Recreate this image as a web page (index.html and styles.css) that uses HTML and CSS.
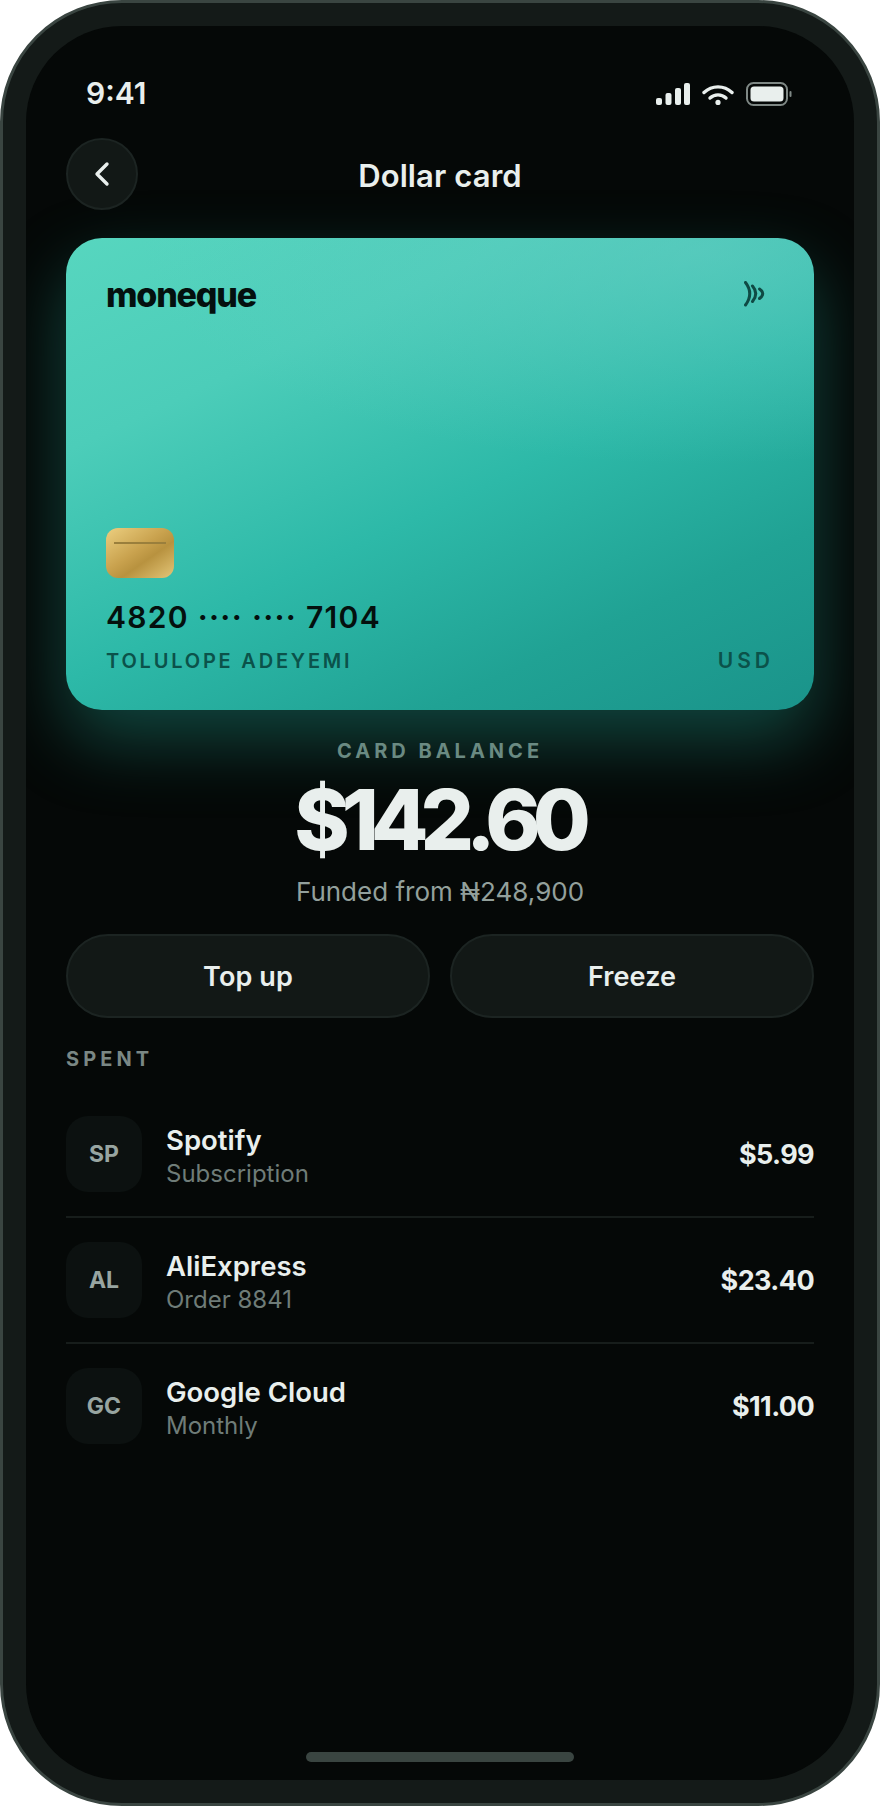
FILE: index.html
```html
<!DOCTYPE html>
<html lang="en">
<head>
<meta charset="utf-8">
<title>Dollar card</title>
<link rel="stylesheet" href="styles.css">
</head>
<body>
<div class="frame">
  <main class="screen">
    <div class="status">
      <span class="time">9:41</span>
      <div class="status-icons">
        <svg class="i-signal" width="34" height="22" viewBox="0 0 34 22"><rect x="0" y="15" width="6" height="7" rx="2"/><rect x="9.5" y="10" width="6" height="12" rx="2"/><rect x="19" y="5" width="6" height="17" rx="2"/><rect x="28" y="0" width="6" height="22" rx="2"/></svg>
        <svg class="i-wifi" width="32" height="22" viewBox="0 0 32 22" fill="none"><path d="M2 9.500C10 2 22 2 30 9.500" stroke-width="3.400" stroke-linecap="round"/><path d="M8 15C12.500 10.800 19.500 10.800 24 15" stroke-width="3.400" stroke-linecap="round"/><circle cx="16" cy="19.400" r="2.600" class="dot"/></svg>
        <svg class="i-batt" width="46" height="24" viewBox="0 0 46 24"><rect x="1" y="1" width="40" height="22" rx="6.500" fill="none" stroke="#7f8885" stroke-width="2"/><rect x="4.500" y="4.500" width="33" height="15" rx="3.500" fill="#e9efed"/><rect x="43.500" y="9" width="2" height="6" rx="1" fill="#7f8885"/></svg>
      </div>
    </div>
    <header class="nav">
      <button class="back" aria-label="Back"><svg width="18" height="26" viewBox="0 0 18 26" fill="none"><path d="M14 3L4 13L14 23" stroke="#e9efed" stroke-width="3.400" stroke-linecap="round" stroke-linejoin="round"/></svg></button>
      <h1 class="title">Dollar card</h1>
    </header>
    <section class="card">
      <div class="card-top">
        <span class="logo">moneque</span>
        <svg class="nfc" width="24" height="26" viewBox="0 0 24 26" fill="none"><path d="M1.500 1.500Q10 12.500 1.500 24M8.500 5Q15 12.500 8.500 20.500M15.500 8Q22 12.500 15.500 17.500" stroke="#0f4a44" stroke-width="3" stroke-linecap="round"/></svg>
      </div>
      <div class="chip"><span class="chip-line"></span></div>
      <div class="number">4820 <span class="dots">····</span> <span class="dots">····</span> 7104</div>
      <div class="card-foot"><span>TOLULOPE ADEYEMI</span><span class="usd">USD</span></div>
    </section>
    <section class="balance">
      <div class="bal-label">CARD BALANCE</div>
      <div class="bal-amount">$142.60</div>
      <div class="bal-sub">Funded from ₦248,900</div>
    </section>
    <div class="actions">
      <button class="action">Top up</button>
      <button class="action">Freeze</button>
    </div>
    <h2 class="spent">SPENT</h2>
    <ul class="list">
      <li class="row"><span class="avatar">SP</span><div class="info"><div class="name">Spotify</div><div class="meta">Subscription</div></div><span class="amt">$5.99</span></li>
      <li class="row"><span class="avatar">AL</span><div class="info"><div class="name">AliExpress</div><div class="meta">Order 8841</div></div><span class="amt">$23.40</span></li>
      <li class="row"><span class="avatar">GC</span><div class="info"><div class="name">Google Cloud</div><div class="meta">Monthly</div></div><span class="amt">$11.00</span></li>
    </ul>
    <div class="home"></div>
  </main>
</div>
</body>
</html>
```

FILE: styles.css
```css
* { box-sizing: border-box; }
html, body { margin: 0; padding: 0; background: #fff; }
body { font-family: Inter, "Liberation Sans", sans-serif; color: #e9efed; }
.frame {
  width: 880px; height: 1806px;
  border: 3px solid #3a4541; border-radius: 122px;
  background: #141a18; padding: 23px;
}
.screen {
  position: relative; overflow: hidden;
  height: 100%; border-radius: 96px; background: #050807;
  padding: 0 40px; display: flex; flex-direction: column;
}
.status {
  height: 112px; padding: 46px 0 0 20px;
  display: flex; justify-content: space-between; align-items: flex-start;
}
.time { font-size: 30px; font-weight: 600; line-height: 42px; color: #e9efed; }
.status-icons { display: flex; align-items: center; gap: 12px; margin: 10px 22px 0 0; }
.i-signal { fill: #e9efed; }
.i-wifi { stroke: #e9efed; }
.i-wifi .dot { fill: #e9efed; stroke: none; }
.nav { height: 72px; position: relative; display: flex; align-items: center; justify-content: center; }
.back {
  position: absolute; left: 0; top: 0; width: 72px; height: 72px; padding: 0;
  border-radius: 50%; border: 2px solid #1c2422; background: #121816;
  display: flex; align-items: center; justify-content: center;
}
.title { margin: 2px 0 0; font-size: 31px; font-weight: 600; letter-spacing: .1px; color: #e9efed; }
.card {
  margin-top: 28px; height: 472px; border-radius: 36px; padding: 40px 40px 0; flex: none;
  background:
    radial-gradient(ellipse 75% 45% at 85% 3%, rgba(100,205,195,.6), rgba(100,205,195,0) 100%),
    linear-gradient(155deg, #57d6bf 0%, #4ccdb9 26%, #2db9a8 54%, #20a294 78%, #1a938a 100%);
  box-shadow: 0 30px 70px rgba(38,180,160,.36);
  display: flex; flex-direction: column;
}
.card-top { display: flex; justify-content: space-between; align-items: center; height: 36px; flex: none; }
.logo { font-size: 34px; font-weight: 800; letter-spacing: -1.200px; color: #04100e; line-height: 36px; margin-top: -3px; }
.nfc { margin: -4px 6px 0 0; }
.chip {
  margin-top: 214px; width: 68px; height: 50px; border-radius: 12px; flex: none; padding: 14px 8px 0;
  background: linear-gradient(145deg, #eccf80 0%, #c9a24e 45%, #b8923f 62%, #e4c678 100%);
}
.chip-line { display: block; height: 2px; background: #9a7f3c; }
.number { margin-top: 19px; font-size: 30px; font-weight: 600; letter-spacing: 1.300px; line-height: 40px; color: #04100e; white-space: nowrap; flex: none; }
.dots { font-weight: 700; }
.card-foot {
  margin-top: 11px; display: flex; justify-content: space-between; align-items: baseline; line-height: 26px; flex: none;
  font-size: 20px; font-weight: 600; letter-spacing: 2.800px; color: #0b524a;
}
.usd { font-size: 21px; letter-spacing: 4px; }
.balance { text-align: center; position: relative; }
.bal-label { margin-top: 28px; font-size: 20px; font-weight: 700; letter-spacing: 4px; line-height: 26px; color: #6a8a82; }
.bal-amount { margin-top: 6px; padding-right: 3px; font-size: 84px; font-weight: 800; letter-spacing: -8px; line-height: 100px; color: #e9efed; }
.bal-sub { margin-top: 6px; font-size: 26px; font-weight: 400; line-height: 32px; color: #93a09c; }
.actions { display: flex; gap: 20px; margin-top: 26px; flex: none; }
.action {
  flex: 1; height: 84px; border-radius: 42px; border: 2px solid #1c2422; background: #121816;
  font-family: inherit; font-size: 27px; font-weight: 600; letter-spacing: .1px; color: #e9efed;
}
.spent { margin: 28px 0 0; font-size: 20px; font-weight: 700; letter-spacing: 4.100px; line-height: 26px; color: #7a8784; }
.list { list-style: none; margin: 20px 0 0; padding: 0; }
.row { display: flex; align-items: center; gap: 24px; padding: 24px 0; border-bottom: 2px solid #171d1b; }
.row:last-child { border-bottom: 0; }
.avatar {
  width: 76px; height: 76px; border-radius: 22px; background: #0c1110; flex: none;
  display: flex; align-items: center; justify-content: center;
  font-size: 23px; font-weight: 700; color: #98a5a1;
}
.info { flex: 1; padding-top: 4px; }
.name { font-size: 27.500px; font-weight: 600; line-height: 35px; color: #e9efed; }
.meta { font-size: 24px; font-weight: 400; line-height: 31px; color: #6f7c78; }
.amt { font-size: 27px; font-weight: 700; color: #e9efed; letter-spacing: -.6px; }
.home {
  position: absolute; left: 280px; bottom: 18px; width: 268px; height: 10px;
  border-radius: 5px; background: #3a4541;
}
```
